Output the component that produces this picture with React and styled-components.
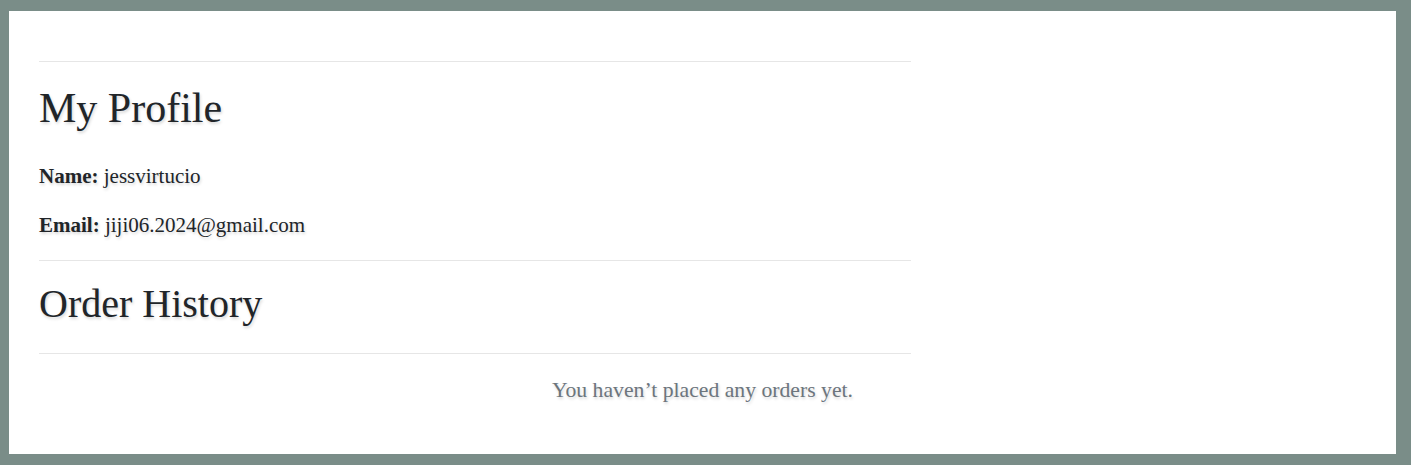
import React from 'react';
import styled, { createGlobalStyle } from 'styled-components';

const GlobalStyle = createGlobalStyle`
    html, body {
        margin: 0;
        padding: 0;
    }
    body {
        background: #7a8d88;
        padding: 11px 15px 11px 9px;
        font-family: "Liberation Serif", "DejaVu Serif", serif;
        color: #212529;
    }
`;

const Panel = styled.div`
    background: #ffffff;
    height: 443px;
    box-sizing: border-box;
    padding-top: 50px;
    text-shadow: 1px 2px 3px rgba(0, 0, 0, 0.16);
`;

const Column = styled.div`
    width: 872px;
    margin-left: 30px;
`;

const Rule = styled.hr`
    margin: 0;
    border: 0;
    border-top: 1px solid #e6e6e6;
`;

const Title = styled.h1`
    margin: ${props => props.$top}px 0 ${props => props.$bottom}px;
    font-size: ${props => props.$size}px;
    line-height: 1.2;
    font-weight: 400;
    letter-spacing: 0;
`;

const Field = styled.p`
    margin: ${props => props.$top}px 0 0;
    font-size: 21px;
    line-height: 30px;

    b {
        font-weight: 700;
    }
`;

const Empty = styled.p`
    margin: 21px 0 0;
    text-align: center;
    font-size: 21.7px;
    line-height: 30px;
    color: #6c757d;
`;

const App = () => {
    const user = { name: 'jessvirtucio', email: 'jiji06.2024@gmail.com' };
    return (
        <>
            <GlobalStyle />
            <Panel>
                <Column>
                    <Rule />
                    <Title $size={42} $top={21} $bottom={0}>My Profile</Title>
                    <Field $top={28}><b>Name:</b> {user.name}</Field>
                    <Field $top={19}><b>Email:</b> {user.email}</Field>
                    <Rule style={{ marginTop: 20 }} />
                    <Title as="h2" $size={40} $top={19} $bottom={25}>Order History</Title>
                    <Rule />
                </Column>
                <Empty>You haven’t placed any orders yet.</Empty>
            </Panel>
        </>
    );
};

export default App;
